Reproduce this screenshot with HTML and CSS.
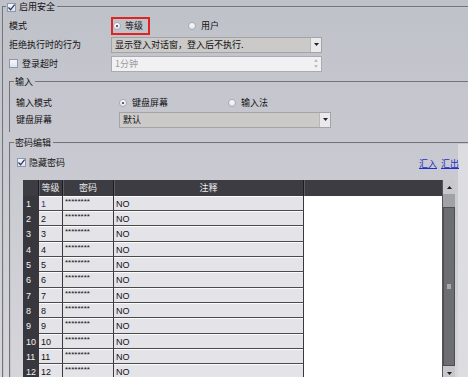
FILE: index.html
```html
<!DOCTYPE html>
<html lang="zh-CN">

<head>
    <meta charset="UTF-8">
    <meta name="viewport" content="width=device-width, initial-scale=1.0">
    <title>启用安全</title>
    <link rel="stylesheet" href="styles.css">
</head>

<body>
    <div class="page">
        <fieldset class="group group-main">
            <legend class="legend legend-main"><span class="check on"><svg viewBox="0 0 9 9"><path d="M1.5 4.5 L3.6 6.8 L7.6 1.6" /></svg></span>启用安全</legend>
            <div class="rows">
                <div class="row">
                    <span class="label">模式</span>
                    <span class="radio-item marked"><span class="radio on"></span>等级</span>
                    <span class="radio-item second"><span class="radio"></span>用户</span>
                </div>
                <div class="row">
                    <span class="label">拒绝执行时的行为</span>
                    <div class="combo">
                        <span class="combo-text">显示登入对话窗，登入后不执行.</span>
                        <span class="combo-btn"><svg viewBox="0 0 5 3"><path d="M0 0 H5 L2.5 3 Z" /></svg></span>
                    </div>
                </div>
                <div class="row">
                    <span class="label"><span class="check"></span>登录超时</span>
                    <div class="spin">
                        <span class="spin-text">1分钟</span>
                        <span class="spin-btn">
                            <svg viewBox="0 0 5 3"><path d="M0 3 H5 L2.5 0 Z" /></svg>
                            <svg viewBox="0 0 5 3"><path d="M0 0 H5 L2.5 3 Z" /></svg>
                        </span>
                    </div>
                </div>
            </div>

            <fieldset class="group group-sub group-input">
                <legend class="legend legend-sub">输入</legend>
                <div class="row row-sm">
                    <span class="label label-sub">输入模式</span>
                    <span class="radio-item wide"><span class="radio on"></span>键盘屏幕</span>
                    <span class="radio-item wide"><span class="radio"></span>输入法</span>
                </div>
                <div class="row row-sm">
                    <span class="label label-sub">键盘屏幕</span>
                    <div class="combo combo-wide">
                        <span class="combo-text">默认</span>
                        <span class="combo-btn"><svg viewBox="0 0 5 3"><path d="M0 0 H5 L2.5 3 Z" /></svg></span>
                    </div>
                </div>
            </fieldset>

            <fieldset class="group group-sub group-pw">
                <legend class="legend legend-sub">密码编辑</legend>
                <div class="pw-row">
                    <span class="label-check"><span class="check on"><svg viewBox="0 0 9 9"><path d="M1.5 4.5 L3.6 6.8 L7.6 1.6" /></svg></span>隐藏密码</span>
                    <span class="links"><a href="#">汇入</a><a href="#">汇出</a></span>
                </div>

                <div class="table-wrap">
                    <div class="grid">
                        <div class="tr thead">
                            <span class="th th-rn"></span>
                            <span class="th">等级</span>
                            <span class="th">密码</span>
                            <span class="th">注释</span>
                            <span class="th th-fill"></span>
                        </div>
                        <div class="tr"><span class="rn">1</span><span class="td first">1</span><span class="td pw">********</span><span class="td">NO</span><span class="fill"></span></div>
                        <div class="tr"><span class="rn">2</span><span class="td">2</span><span class="td pw">********</span><span class="td">NO</span><span class="fill"></span></div>
                        <div class="tr"><span class="rn">3</span><span class="td">3</span><span class="td pw">********</span><span class="td">NO</span><span class="fill"></span></div>
                        <div class="tr"><span class="rn">4</span><span class="td">4</span><span class="td pw">********</span><span class="td">NO</span><span class="fill"></span></div>
                        <div class="tr"><span class="rn">5</span><span class="td">5</span><span class="td pw">********</span><span class="td">NO</span><span class="fill"></span></div>
                        <div class="tr"><span class="rn">6</span><span class="td">6</span><span class="td pw">********</span><span class="td">NO</span><span class="fill"></span></div>
                        <div class="tr"><span class="rn">7</span><span class="td">7</span><span class="td pw">********</span><span class="td">NO</span><span class="fill"></span></div>
                        <div class="tr"><span class="rn">8</span><span class="td">8</span><span class="td pw">********</span><span class="td">NO</span><span class="fill"></span></div>
                        <div class="tr"><span class="rn">9</span><span class="td">9</span><span class="td pw">********</span><span class="td">NO</span><span class="fill"></span></div>
                        <div class="tr"><span class="rn">10</span><span class="td">10</span><span class="td pw">********</span><span class="td">NO</span><span class="fill"></span></div>
                        <div class="tr"><span class="rn">11</span><span class="td">11</span><span class="td pw">********</span><span class="td">NO</span><span class="fill"></span></div>
                        <div class="tr"><span class="rn">12</span><span class="td">12</span><span class="td pw">********</span><span class="td">NO</span><span class="fill"></span></div>
                    </div>
                    <div class="scroll">
                        <span class="sb-btn"><svg viewBox="0 0 5 3"><path d="M0 3 H5 L2.5 0 Z" /></svg></span>
                        <span class="sb-track"></span>
                        <span class="sb-thumb"><span class="grip"></span></span>
                        <span class="sb-btn"><svg viewBox="0 0 5 3"><path d="M0 0 H5 L2.5 3 Z" /></svg></span>
                    </div>
                </div>
            </fieldset>
        </fieldset>
    </div>
</body>

</html>
```

FILE: styles.css
```css
body {
    margin: 0;
    width: 468px;
    height: 377px;
    overflow: hidden;
    background: linear-gradient(#bfc1c9, #c8c9d0 40%, #d5d5da);
    font-family: "Noto Sans CJK SC", "Noto Sans", sans-serif;
    font-size: 9px;
    line-height: 1;
    color: #111113;
}

.page {
    padding-left: 2px;
}

/* group boxes */
.group {
    margin: 0;
    padding: 0;
    min-width: 0;
    border: 0;
    border-top: 2px groove #c4c6cc;
    border-left: 2px groove #c4c6cc;
}

.group-main {
    padding: 0 9px 0 5px;
}

.group-sub {
    margin-right: -9px;
}

.group-input {
    margin-top: 2px;
    padding: 5px 0 4px 5px;
}

.group-pw {
    margin-top: 4px;
    padding: 4px 9px 0 5px;
    height: 240px;
    background: linear-gradient(to left, #dddde1 10px, transparent 10px);
}

.legend {
    display: flex;
    align-items: center;
    height: 14px;
    line-height: 14px;
}

.legend-main {
    gap: 3px;
    margin-left: -3px;
    padding: 0 2px 0 1px;
}

.legend-sub {
    margin-left: -2px;
    padding: 0 2px 0 1px;
}

.rows {
    padding-top: 2px;
}

.row {
    display: flex;
    align-items: center;
    height: 19px;
}

.row-sm {
    height: 17px;
}

.label {
    flex: none;
    display: flex;
    align-items: center;
    gap: 4px;
    width: 102px;
}

.label-sub {
    width: 103px;
}

/* checkbox */
.check {
    flex: none;
    display: inline-block;
    box-sizing: border-box;
    width: 9px;
    height: 9px;
    border: 1px solid #8a97ad;
    background: linear-gradient(#f7f8fb, #dfe3ea);
}

.check svg {
    display: block;
    width: 9px;
    height: 9px;
    margin: -1px 0 0 -1px;
    fill: none;
    stroke: #2b3566;
    stroke-width: 1.3;
}

/* radio */
.radio-item {
    display: inline-flex;
    align-items: center;
    gap: 4px;
}

.radio-item.marked {
    height: 14px;
    border: 2px solid #e02424;
    padding: 0 5px 0 0;
}

.radio-item.second {
    margin-left: 38px;
    gap: 5px;
}

.radio-item.wide {
    width: 109px;
    gap: 5px;
}

.radio {
    flex: none;
    position: relative;
    box-sizing: border-box;
    width: 8px;
    height: 8px;
    border: 1px solid #a7aab4;
    border-radius: 50%;
    background: linear-gradient(#fdfdfe, #e2e4ea);
}

.radio.on::after {
    content: "";
    position: absolute;
    left: 2px;
    top: 2px;
    width: 2px;
    height: 2px;
    border-radius: 50%;
    background: #2c2f3c;
}

/* combo and spin boxes */
.combo,
.spin {
    display: flex;
    box-sizing: border-box;
    width: 211px;
    height: 16px;
    border: 1px solid #a4a4a6;
}

.combo {
    background: #cccac8;
}

.combo-wide {
    width: 212px;
}

.combo-text,
.spin-text {
    flex: 1;
    padding-left: 3px;
    line-height: 14px;
    white-space: nowrap;
    overflow: hidden;
}

.combo-btn {
    flex: none;
    display: flex;
    align-items: center;
    justify-content: center;
    width: 10px;
    background: #eaeaee;
    border-left: 1px solid #b9b9bd;
}

.combo-btn svg {
    width: 5px;
    height: 3px;
    fill: #222;
}

.spin {
    background: #f1f1f3;
    color: #9c9c9e;
    border-color: #ababaf;
}

.spin-btn {
    flex: none;
    display: flex;
    flex-direction: column;
    align-items: center;
    justify-content: center;
    gap: 3px;
    width: 10px;
}

.spin-btn svg {
    width: 4px;
    height: 3px;
    fill: #b5b5b8;
}

/* password section */
.pw-row {
    display: flex;
    align-items: center;
    height: 16px;
}

.label-check {
    display: flex;
    align-items: center;
    gap: 3px;
    padding-left: 1px;
}

.links {
    margin-left: auto;
    display: flex;
    gap: 4px;
    padding-top: 3px;
}

.links a {
    color: #2430c0;
}

.table-wrap {
    display: flex;
    height: 200px;
    margin: 10px 4px 0 7px;
}

.grid {
    flex: 1;
    background: #fff;
}

.tr {
    display: grid;
    grid-template-columns: 16px 24px 51px 190px 1fr;
    height: 15px;
    font-family: "Liberation Sans", Arial, sans-serif;
    font-size: 9px;
}

.tr:nth-child(3n+4) {
    height: 16px;
}

.thead {
    height: 16px;
    background: #3c3c42;
    color: #ececee;
    font-family: "Noto Sans CJK SC", sans-serif;
}

.th {
    line-height: 16px;
    text-align: center;
    border-right: 1px solid #1d1d21;
    box-shadow: inset 1px 0 0 #5c5c62;
}

.th-rn {
    box-shadow: none;
}

.th-fill {
    border-right: 0;
}

.rn {
    background: #37373d;
    color: #f2f2f4;
    padding-left: 3px;
    padding-top: 4px;
}

.td {
    box-sizing: border-box;
    padding: 4px 0 0 2px;
    background: #e4e3e8;
    border-right: 1px solid #39393d;
    border-bottom: 1px solid #4a4a4e;
    box-shadow: inset 0 1px 0 #fbfbfc;
}

.td.first {
    color: #40307a;
}

.td.pw {
    font-size: 8px;
    padding-top: 2px;
}

.fill {
    background: #fff;
}

/* scrollbar */
.scroll {
    display: flex;
    flex-direction: column;
    flex: none;
    width: 12px;
    background: #8e8f92;
    border-left: 1px solid #56565a;
}

.sb-btn {
    display: flex;
    align-items: center;
    justify-content: center;
    height: 14px;
    background: #c8c8cc;
}

.sb-btn svg {
    width: 5px;
    height: 3px;
    fill: #1a1a1a;
}

.sb-track {
    height: 13px;
    background: #a1a2a5;
}

.sb-thumb {
    flex: 1;
    display: flex;
    align-items: center;
    justify-content: center;
    background: #6d6e71;
    border: 1px solid #4e4e52;
}

.grip {
    width: 4px;
    height: 5px;
    background: #a9a9ac;
}
```
